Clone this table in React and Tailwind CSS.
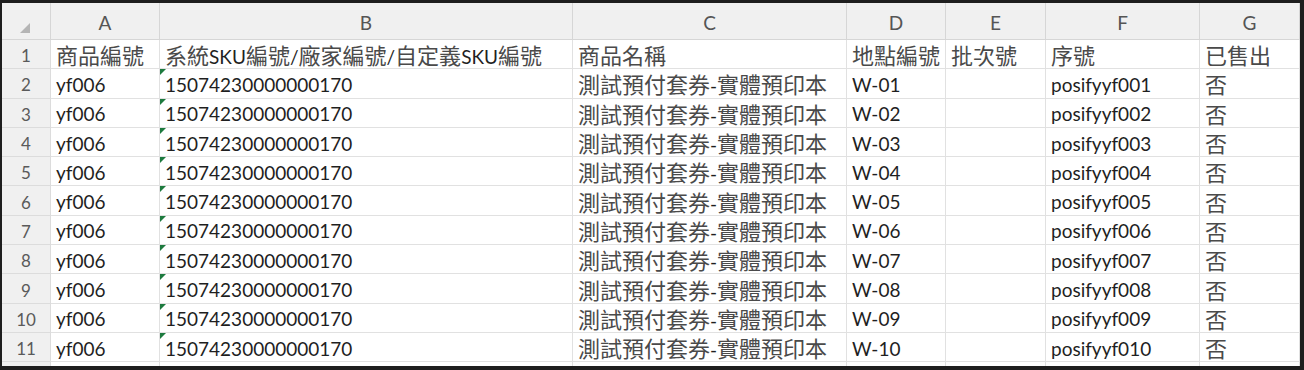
import React from "react";

const cols = ["A", "B", "C", "D", "E", "F", "G"];
const header = ["商品編號", "系統SKU編號/廠家編號/自定義SKU編號", "商品名稱", "地點編號", "批次號", "序號", "已售出"];

const rows = Array.from({ length: 10 }, (_, i) => {
  const n = String(i + 1).padStart(2, "0");
  const n3 = String(i + 1).padStart(3, "0");
  return ["yf006", "15074230000000170", "測試預付套券-實體預印本", `W-${n}`, "", `posifyyf${n3}`, "否"];
});

function Mixed({ text }) {
  const parts = text.match(/[\u3000-\u9fff\uff00-\uffef]+|[^\u3000-\u9fff\uff00-\uffef]+/g) || [];
  return (
    <span className="whitespace-nowrap leading-[24px]">
      {parts.map((p, i) =>
        /[\u3000-\u9fff\uff00-\uffef]/.test(p) ? (
          <span key={i} className="text-[22px] leading-[24px] text-[#4a4a4a] [font-family:'Noto_Sans_CJK_TC',sans-serif]">
            {p}
          </span>
        ) : (
          <span key={i} className="text-[19px] leading-[24px] text-[#1f1f1f] [font-family:Lato,'Noto_Sans_CJK_TC',sans-serif]">
            {p}
          </span>
        )
      )}
    </span>
  );
}

export default function App() {
  return (
    <div className="w-[1304px] h-[370px] bg-[#1e1e1e] pt-[3px] pl-[2px] pr-[4px] pb-[4px] overflow-hidden">
      <div className="bg-white h-full overflow-hidden grid grid-cols-[49px_109px_413px_274px_99px_100px_154px_100px] auto-rows-[29.3px] [grid-template-rows:37px] [font-family:Lato,sans-serif]">
        {/* corner */}
        <div className="h-[37px] bg-[#f0f0f0] border-r border-b border-[#d6d6d6] flex items-center justify-center">
          <div className="w-0 h-0 border-b-[10px] border-b-[#b5b5b5] border-l-[10px] border-l-transparent -ml-[2px] mt-[13px]" />
        </div>
        {cols.map((c) => (
          <div
            key={c}
            className="h-[37px] bg-[#f0f0f0] border-r border-b border-[#d6d6d6] flex items-center justify-center text-[19px] leading-[22px] text-[#555] pt-[3px]"
          >
            {c}
          </div>
        ))}

        {/* row 1 */}
        <div className="bg-[#f0f0f0] border-r border-b border-[#dcdcdc] flex items-center justify-center text-[17px] leading-[20px] text-[#5a5a5a] pt-[4px]">
          1
        </div>
        {header.map((h, i) => (
          <div key={i} className="border-r border-b border-[#e1e1e1] flex items-center pl-[5px] pt-[3px]">
            <Mixed text={h} />
          </div>
        ))}

        {rows.map((r, ri) => (
          <React.Fragment key={ri}>
            <div className="bg-[#f0f0f0] border-r border-b border-[#dcdcdc] flex items-center justify-center text-[17px] leading-[20px] text-[#5a5a5a] pt-[4px]">
              {ri + 2}
            </div>
            {r.map((v, ci) => (
              <div
                key={ci}
                className="relative border-r border-b border-[#e1e1e1] flex items-center pl-[5px] pt-[4px]"
              >
                {ci === 1 && (
                  <div className="absolute top-0 left-0 w-0 h-0 border-t-[6px] border-t-[#1d7a3e] border-r-[6px] border-r-transparent" />
                )}
                {v && <Mixed text={v} />}
              </div>
            ))}
          </React.Fragment>
        ))}
        {/* partial row 12 */}
        <div className="bg-[#f0f0f0] border-r border-[#dcdcdc]" />
        {cols.map((c) => (
          <div key={c} className="border-r border-[#e1e1e1]" />
        ))}
      </div>
    </div>
  );
}
